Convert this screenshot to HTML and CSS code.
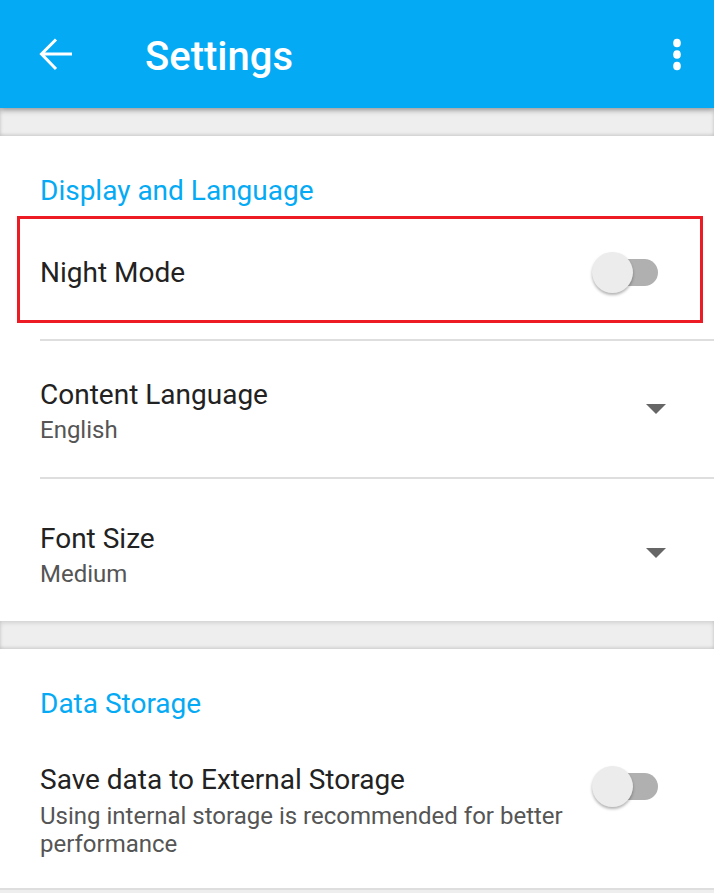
FILE: index.html
```html
<!DOCTYPE html>
<html>
<head>
    <title>Settings</title>
    <link rel="stylesheet" href="styles.css">
</head>
<body>
    <div class="app-bar">
        <svg class="back-icon" width="34" height="34" viewBox="0 0 34 34"><path d="M33 16H2.5M17 1.5L2.5 16L17 31" fill="none" stroke="#fff" stroke-width="3"/></svg>
        <h1>Settings</h1>
        <svg class="menu-icon" width="10" height="34" viewBox="0 0 10 34"><ellipse cx="5" cy="5" rx="3.8" ry="4.3" fill="#fff"/><ellipse cx="5" cy="16.5" rx="3.8" ry="4.3" fill="#fff"/><ellipse cx="5" cy="28" rx="3.8" ry="4.3" fill="#fff"/></svg>
    </div>

    <div class="gap"></div>

    <div class="card">
        <div class="section-title">Display and Language</div>
        <div class="row highlighted">
            <div class="row-text">
                <div class="row-title">Night Mode</div>
            </div>
            <div class="switch"><div class="thumb"></div></div>
        </div>
        <div class="row with-divider first-divider">
            <div class="row-text">
                <div class="row-title">Content Language</div>
                <div class="row-sub">English</div>
            </div>
            <div class="caret"></div>
        </div>
        <div class="row with-divider last-row">
            <div class="row-text">
                <div class="row-title">Font Size</div>
                <div class="row-sub">Medium</div>
            </div>
            <div class="caret"></div>
        </div>
    </div>

    <div class="gap"></div>

    <div class="card">
        <div class="section-title">Data Storage</div>
        <div class="row storage-row">
            <div class="row-text">
                <div class="row-title">Save data to External Storage</div>
                <div class="row-sub">Using internal storage is recommended for better performance</div>
            </div>
            <div class="switch"><div class="thumb"></div></div>
        </div>
    </div>
</body>
</html>
```

FILE: styles.css
```css
body {
    font-family: Roboto, "Noto Sans", sans-serif;
    margin: 0;
    background: #eeeeee;
    overflow: hidden;
}
.app-bar {
    height: 108px;
    background: #05aaf5;
    display: flex;
    align-items: center;
    padding: 0 32px 0 39px;
    position: relative;
    z-index: 2;
    box-shadow: 0 2px 6px rgba(0,0,0,0.3);
}
.back-icon {
    margin-top: 2px;
}
.menu-icon {
    margin-top: 2px;
}
.app-bar h1 {
    margin: 4px 0 0 72px;
    flex: 1;
    color: white;
    font-size: 40px;
    font-weight: 500;
}
.gap {
    height: 28px;
    box-shadow: inset 0 2px 4px rgba(0,0,0,0.12), inset 0 -2px 3px rgba(0,0,0,0.1);
}
.card {
    background: white;
}
.section-title {
    color: #05aaf5;
    font-size: 28px;
    line-height: 34px;
    padding: 38px 40px 8px;
}
.row {
    display: flex;
    align-items: center;
    padding: 0 56px 0 40px;
    color: #222;
}
.row-text {
    flex: 1;
}
.row-title {
    font-size: 28px;
    line-height: 34px;
}
.row-sub {
    font-size: 24px;
    line-height: 30px;
    color: #555;
    margin-top: 3px;
}
.highlighted {
    box-sizing: border-box;
    margin: 0 11px 0 17px;
    padding: 6px 42px 0 20px;
    height: 107px;
    border: 3px solid #ed1c24;
}
.with-divider {
    align-items: flex-start;
    margin-left: 40px;
    padding: 37px 48px 0 0;
    box-sizing: border-box;
    height: 138px;
    border-top: 2px solid #dedede;
}
.first-divider {
    margin-top: 16px;
}
.last-row {
    padding-top: 43px;
    height: 144px;
}
.switch {
    width: 58px;
    height: 27px;
    border-radius: 14px;
    background: #b0b0b0;
    position: relative;
    margin-left: 8px;
}
.thumb {
    position: absolute;
    left: -8px;
    top: -7px;
    width: 41px;
    height: 41px;
    border-radius: 50%;
    background: #ececec;
    box-shadow: 0 2px 3px rgba(0,0,0,0.3);
}
.caret {
    width: 0;
    height: 0;
    margin-top: 26px;
    border-left: 10px solid transparent;
    border-right: 10px solid transparent;
    border-top: 10px solid #666;
}
.storage-row {
    align-items: flex-start;
    padding-top: 34px;
    padding-bottom: 30px;
    border-bottom: 2px solid #dedede;
}
.storage-row .switch {
    margin-top: 10px;
    margin-left: 30px;
}
.storage-row .row-sub {
    line-height: 28px;
    margin-top: 5px;
}
```
